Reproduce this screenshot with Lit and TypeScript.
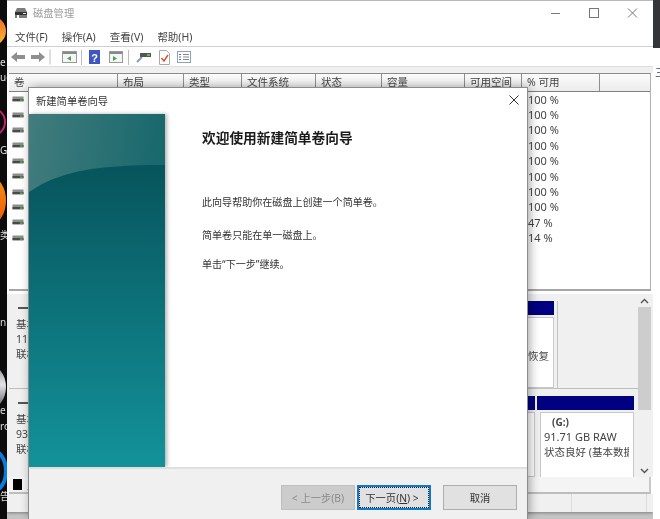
import { LitElement, html, css, svg } from "lit";
import { customElement } from "lit/decorators.js";

const COLUMNS = ["卷", "布局", "类型", "文件系统", "状态", "容量", "可用空间", "% 可用", ""];
const ROWS = [
  ["", "100 %"], ["", "100 %"], ["", "100 %"], ["(C:)", "100 %"], ["(D:)", "100 %"],
  ["(E:)", "100 %"], ["(F:)", "100 %"], ["(G:)", "100 %"], ["Data", "47 %"], ["VM", "14 %"],
];

const driveIcon = svg`<svg class="drive" viewBox="0 0 12 6" width="12" height="6">
  <rect x="0.5" y="0.5" width="11" height="4.5" fill="#8d8d8d"/>
  <rect x="0.5" y="3" width="11" height="2.4" fill="#4a4a4a"/>
  <rect x="8" y="3.4" width="2.6" height="1.4" fill="#58c04a"/>
</svg>`;

@customElement("app-root")
export class AppRoot extends LitElement {
  static styles = css`
    :host {
      display: block;
      width: 660px;
      height: 519px;
      overflow: hidden;
      font-family: "Noto Sans", "Noto Sans CJK SC", sans-serif;
      font-size: 10.5px;
      color: #333;
    }
    .desk {
      position: relative;
      display: grid;
      grid-template-columns: 7px 646px 7px;
      width: 660px;
      height: 519px;
      overflow: hidden;
      background: #c4c4c4;
      filter: blur(0.3px);
    }

    /* desktop strip on the left */
    .strip { position: relative; background: #0c0c0c; overflow: hidden; }
    .strip span { position: absolute; left: 0; color: #ddd; font-size: 10px; line-height: 12px; }
    .blob { position: absolute; border-radius: 50%; }
    .b1 { left: -24px; top: 16px; width: 30px; height: 30px; background: linear-gradient(#f06a2a, #f5bd2e); }
    .b2 { left: -24px; top: 107px; width: 26px; height: 26px; border: 2px solid #c4246c; }
    .b3 { left: -24px; top: 177px; width: 30px; height: 47px; background: linear-gradient(#f29017, #ec5a06); }
    .b4 { left: -28px; top: 365px; width: 34px; height: 44px; background: linear-gradient(#8d8d93, #e4e4e8 45%, #55555c); }
    .b5 { left: -22px; top: 449px; width: 22px; height: 36px; border: 4px solid #0a7be0; }
    .t1 { top: 56px; }
    .t2 { top: 71px; }
    .t3 { top: 144px; }
    .t4 { top: 229px; }
    .t5 { top: 316px; }
    .t6 { top: 404px; }
    .t7 { top: 420px; }
    .t8 { top: 490px; }

    .side { display: flex; flex-direction: column; background: #fff; position: relative; }
    .side .top { height: 48px; background: #333538; }
    .side .mark { font-size: 11px; color: #345; margin: 18px 0 0 2px; line-height: 14px; }

    /* main window */
    .win {
      margin-top: 1px;
      height: 511px;
      display: flex;
      flex-direction: column;
      background: #fff;
      box-shadow: 0 1px 3px rgba(0, 0, 0, 0.35);
    }
    .titlebar { height: 29px; box-sizing: border-box; display: flex; align-items: center; flex: none; padding: 0 0 6px 7px; }
    .titlebar .name { margin-left: 5px; color: #9a9a9a; font-size: 10.3px; }
    .winbtns { margin-left: auto; display: flex; align-items: center; }
    .winbtns svg { display: block; }
    .menubar {
      height: 17px;
      box-sizing: border-box;
      flex: none;
      display: flex;
      gap: 14px;
      padding: 0 0 4px 8px;
      align-items: center;
      border-bottom: 1px solid #cfcfcf;
      color: #444;
    }
    .toolbar {
      height: 20px;
      box-sizing: border-box;
      flex: none;
      display: flex;
      align-items: center;
      padding: 1px 0 0 4px;
      border-bottom: 1px solid #dedede;
    }
    .toolbar svg { display: block; flex: none; }
    .sep { width: 1px; height: 15px; background: #bcbcbc; flex: none; }
    .band { height: 6px; flex: none; background: #f0f0f0; }

    /* volume list */
    .list { height: 215px; flex: none; margin: 0 2px; border-top: 1px solid #8a8a8a; background: #fff; border-bottom: 2px solid #a6a6a6; border-right: 1px solid #b0b0b0; }
    .head {
      display: grid;
      grid-template-columns: 109px 66px 58px 74px 66px 83px 57px 78px 51px;
      height: 17px;
      margin-bottom: -0.5px;
      background: linear-gradient(#fbfbfb, #ececec);
      border-bottom: 1px solid #808080;
    }
    .head div { padding-left: 5px; border-right: 1px solid #8f8f8f; line-height: 17px; color: #444; white-space: nowrap; overflow: hidden; }
    .head div:last-child { border-right: none; }
    .row { display: grid; grid-template-columns: 513px 1fr; height: 15.4px; align-items: center; }
    .row .vol { display: flex; align-items: center; gap: 4px; padding-left: 3px; }
    .drive { display: block; flex: none; }
    .row .pct { font-size: 11px; color: #444; padding-left: 6px; }

    /* graphical view */
    .lower { height: 183px; flex: none; margin-top: 3px; display: flex; background: #f0f0f0; padding-left: 2px; }
    .disks { flex: 1; min-width: 0; overflow: hidden; }
    .disk { display: flex; border-bottom: 1px solid #bdbdbd; }
    .disk.a { height: 95px; padding-top: 7px; box-sizing: border-box; }
    .disk.b { height: 88px; padding-top: 7px; box-sizing: border-box; border-bottom: none; }
    .info { width: 111px; flex: none; padding-left: 7px; box-sizing: border-box; line-height: 15px; font-size: 10.5px; color: #444; }
    .info .dash { height: 2px; width: 14px; background: #555; margin: 6px 0 8px 2px; }
    .group { display: flex; gap: 2px; padding-right: 3px; border-right: 1px solid #c2c2c2; border-bottom: 1px solid #c2c2c2; height: 88px; box-sizing: border-box; }
    .part { display: flex; flex-direction: column; }
    .cap { height: 14px; flex: none; background: #000080; }
    .body {
      flex: 1;
      margin-top: 2px;
      background: #fff;
      border: 1px solid #c8c8c8;
      padding: 4px 0 0 3px;
      line-height: 15px;
      white-space: nowrap;
      overflow: hidden;
      font-size: 10.5px;
      color: #444;
    }
    .p1 { width: 434px; }
    .p1 .body { padding: 31px 4px 0 0; text-align: right; }
    .p2 { width: 415px; }
    .p3 { width: 97px; }
    .p3 .body { margin-left: 3px; padding-top: 2px; border-bottom: none; }
    .p3 .lines { width: 85px; margin-top: -1px; overflow: hidden; font-size: 10.5px; }
    .p3 .size { font-size: 11px; }
    .p3 .drv { font-weight: 700; padding-left: 8px; font-size: 10px; }
    .disk.b .group { border: none; padding-right: 0; height: 81px; }
    .vbar { width: 13px; flex: none; display: flex; flex-direction: column; background: #f0f0f0; margin-right: 2px; }
    .vbar .arrow { height: 13px; display: grid; place-items: center; }
    .vbar .thumb { height: 103px; background: #cdcdcd; }
    .vbar .rest { flex: 1; }
    .legend { height: 15px; flex: none; margin: 0 2px; display: flex; align-items: center; padding-left: 4px; gap: 5px; background: #f4f4f4; border-bottom: 2px solid #bdbdbd; border-right: 2px solid #c8c8c8; }
    .legend i { width: 9px; height: 11px; background: #000; display: block; }
    .status { flex: 1; background: #f0f0f0; display: grid; grid-template-columns: 1fr 75px 7px; }
    .status div + div { border-left: 1px solid #dcdcdc; }

    /* wizard dialog */
    .dialog {
      position: absolute;
      left: 29px;
      top: 88px;
      width: 498px;
      height: 431px;
      background: #fff;
      display: flex;
      flex-direction: column;
      outline: 1px solid #8c8c8c;
      box-shadow: 2px 0 10px rgba(0, 0, 0, 0.4);
    }
    .dtitle { height: 26px; box-sizing: border-box; flex: none; display: flex; align-items: center; padding: 0 8px 2px 7px; font-size: 10.3px; color: #333; justify-content: space-between; }
    .dmain { flex: 1; display: flex; min-height: 0; }
    .panel { width: 136px; flex: none; box-shadow: 2px 0 4px rgba(0, 0, 0, 0.3); }
    .panel svg { display: block; }
    .content { padding: 14px 0 0 37px; color: #333; font-size: 10.05px; line-height: 14px; }
    .content h1 { margin: 0 0 47px; font-size: 13.7px; line-height: 20px; font-weight: 700; color: #1a1a1a; }
    .content p { margin: 0 0 19px; }
    .content p + p + p { margin-top: -4px; }
    .foot {
      height: 52px;
      flex: none;
      box-sizing: border-box;
      background: #f0f0f0;
      border-top: 2px solid #dfdfdf;
      display: flex;
      align-items: flex-start;
      padding: 16px 0 0 252px;
    }
    .foot button {
      font: inherit;
      font-size: 10.3px;
      width: 74px;
      height: 25px;
      box-sizing: border-box;
      padding: 0;
      color: #333;
      background: #e1e1e1;
      border: 1px solid #adadad;
    }
    .foot .prev { background: #cccccc; border-color: #bfbfbf; color: #8a8a8a; }
    .foot .next { margin-left: 2px; padding-right: 4px; border: 2px solid #0f78c8; outline: 1px dotted #222; outline-offset: -3px; }
    .foot .next u { text-underline-offset: 1px; }
    .foot .cancel { margin-left: 12px; }
  `;

  render() {
    return html`
      <div class="desk">
        <div class="strip">
          <i class="blob b1"></i><span class="t1">e</span><span class="t2">uc</span>
          <i class="blob b2"></i><span class="t3">G</span>
          <i class="blob b3"></i><span class="t4">类</span>
          <span class="t5">n</span>
          <i class="blob b4"></i><span class="t6">e</span><span class="t7">ro</span>
          <i class="blob b5"></i><span class="t8">告</span>
        </div>

        <div class="win">
          <div class="titlebar">
            <svg viewBox="0 0 14 12" width="14" height="12">
              <path d="M3 1h8l2 4v6H1V5z" fill="#7c7c7c"/>
              <rect x="1" y="5" width="12" height="3" fill="#333"/>
              <rect x="9" y="6" width="3" height="1" fill="#dcdcdc"/>
              <rect x="3" y="8" width="2" height="3" fill="#fff"/>
            </svg>
            <span class="name">磁盘管理</span>
            <div class="winbtns">
              <svg width="26" height="12" viewBox="0 0 26 12"><path d="M13 6.5h9" stroke="#777" fill="none"/></svg>
              <svg width="38" height="12" viewBox="0 0 38 12"><rect x="25.5" y="1.5" width="9" height="9" stroke="#777" fill="none"/></svg>
              <svg width="51" height="12" viewBox="0 0 51 12"><path d="M26 1.5l9 9M35 1.5l-9 9" stroke="#777" fill="none"/></svg>
            </div>
          </div>
          <div class="menubar"><span>文件(F)</span><span>操作(A)</span><span>查看(V)</span><span>帮助(H)</span></div>
          <div class="toolbar">
            <svg width="34" height="14" viewBox="0 0 34 14">
              <path d="M0 7l6-5v3h8v4H6v3z" fill="#8f8f8f"/>
              <path d="M34 7l-6-5v3h-8v4h8v3z" fill="#8f8f8f"/>
            </svg>
            <svg width="15" height="16" viewBox="0 0 15 16"><path d="M5 0.5v15" stroke="#bcbcbc"/></svg>
            <svg width="21" height="14" viewBox="0 0 21 14">
              <rect x="2.5" y="1.5" width="14" height="11" fill="#f5f5f5" stroke="#999"/>
              <rect x="3" y="2" width="13" height="2" fill="#888"/>
              <path d="M11 6v5l-4-2.5z" fill="#4aa64a"/>
            </svg>
            <div class="sep"></div>
            <svg width="27" height="16" viewBox="0 0 27 16">
              <rect x="7" y="1" width="11" height="14" fill="#3f55c0"/>
              <text x="12.5" y="12.5" font-size="11" font-weight="700" fill="#fff" text-anchor="middle" font-family="Liberation Sans">?</text>
            </svg>
            <svg width="19" height="14" viewBox="0 0 19 14">
              <rect x="0.5" y="1.5" width="13" height="11" fill="#f5f5f5" stroke="#999"/>
              <rect x="1" y="2" width="12" height="2" fill="#888"/>
              <path d="M4 6v5l4-2.5z" fill="#4aa64a"/>
            </svg>
            <div class="sep"></div>
            <svg width="29" height="14" viewBox="0 0 29 14">
              <path d="M8 12l5-5" stroke="#7f9dc4" stroke-width="2"/>
              <rect x="11" y="3" width="11" height="4" fill="#555"/>
              <rect x="18" y="4" width="3" height="2" fill="#58c04a"/>
            </svg>
            <svg width="18" height="15" viewBox="0 0 18 15">
              <path d="M1.5 0.5h7l3 3v11h-10z" fill="#fff" stroke="#aaa"/>
              <path d="M3.5 8l2.5 3 4-6" stroke="#d8512a" stroke-width="1.4" fill="none"/>
            </svg>
            <svg width="16" height="13" viewBox="0 0 16 13">
              <rect x="1.5" y="0.5" width="13" height="11" fill="#fff" stroke="#8fa3b8"/>
              <path d="M7 3.5h6M7 6h6M7 8.5h6" stroke="#888"/>
              <path d="M3 3.5h2M3 6h2M3 8.5h2" stroke="#4b76b8"/>
            </svg>
          </div>
          <div class="band"></div>

          <div class="list">
            <div class="head">${COLUMNS.map((c) => html`<div>${c}</div>`)}</div>
            ${ROWS.map(
              ([name, pct]) => html`
                <div class="row">
                  <div class="vol">${driveIcon}<span>${name}</span></div>
                  <div class="pct">${pct}</div>
                </div>
              `
            )}
          </div>

          <div class="lower">
            <div class="disks">
              <div class="disk a">
                <div class="info">
                  <div class="dash"></div>
                  基本<br />111.79 GB<br />联机
                </div>
                <div class="group">
                  <div class="part p1"><div class="cap"></div><div class="body">状态良好 (恢复</div></div>
                </div>
              </div>
              <div class="disk b">
                <div class="info">
                  <div class="dash"></div>
                  基本<br />93.16 GB<br />联机
                </div>
                <div class="group">
                  <div class="part p2"><div class="cap"></div><div class="body"></div></div>
                  <div class="part p3">
                    <div class="cap"></div>
                    <div class="body">
                      <div class="drv">(G:)</div>
                      <div class="lines"><span class="size">91.71 GB RAW</span><br />状态良好 (基本数据分区)</div>
                    </div>
                  </div>
                </div>
              </div>
            </div>
            <div class="vbar">
              <div class="arrow"><svg width="9" height="6" viewBox="0 0 9 6"><path d="M1 5l3.5-3.5L8 5" stroke="#555" stroke-width="1.4" fill="none"/></svg></div>
              <div class="thumb"></div>
              <div class="rest"></div>
              <div class="arrow"><svg width="9" height="6" viewBox="0 0 9 6"><path d="M1 1l3.5 3.5L8 1" stroke="#555" stroke-width="1.4" fill="none"/></svg></div>
            </div>
          </div>
          <div class="legend"><i></i><span>主分区</span></div>
          <div class="status"><div></div><div></div><div></div></div>
        </div>

        <div class="side">
          <div class="top"></div>
          <div class="mark">三</div>
        </div>

        <div class="dialog">
          <div class="dtitle">
            <span>新建简单卷向导</span>
            <svg width="10" height="10" viewBox="0 0 10 10"><path d="M0.5 0.5l9 9M9.5 0.5l-9 9" stroke="#333" fill="none"/></svg>
          </div>
          <div class="dmain">
            <div class="panel">
              <svg width="136" height="353" viewBox="0 0 136 353">
                <defs>
                  <linearGradient id="sky" x1="0" y1="0" x2="1" y2="0.35">
                    <stop offset="0" stop-color="#427c7e"/>
                    <stop offset="1" stop-color="#14666a"/>
                  </linearGradient>
                  <linearGradient id="sea" x1="0" y1="0" x2="0" y2="1">
                    <stop offset="0" stop-color="#07545c"/>
                    <stop offset="1" stop-color="#13929a"/>
                  </linearGradient>
                </defs>
                <rect width="136" height="353" fill="url(#sky)"/>
                <path d="M0 78C30 58 62 51 136 51V353H0z" fill="url(#sea)"/>
              </svg>
            </div>
            <div class="content">
              <h1>欢迎使用新建简单卷向导</h1>
              <p>此向导帮助你在磁盘上创建一个简单卷。</p>
              <p>简单卷只能在单一磁盘上。</p>
              <p>单击“下一步”继续。</p>
            </div>
          </div>
          <div class="foot">
            <button class="prev">&lt; 上一步(B)</button>
            <button class="next">下一页(<u>N</u>) &gt;</button>
            <button class="cancel">取消</button>
          </div>
        </div>
      </div>
    `;
  }
}
